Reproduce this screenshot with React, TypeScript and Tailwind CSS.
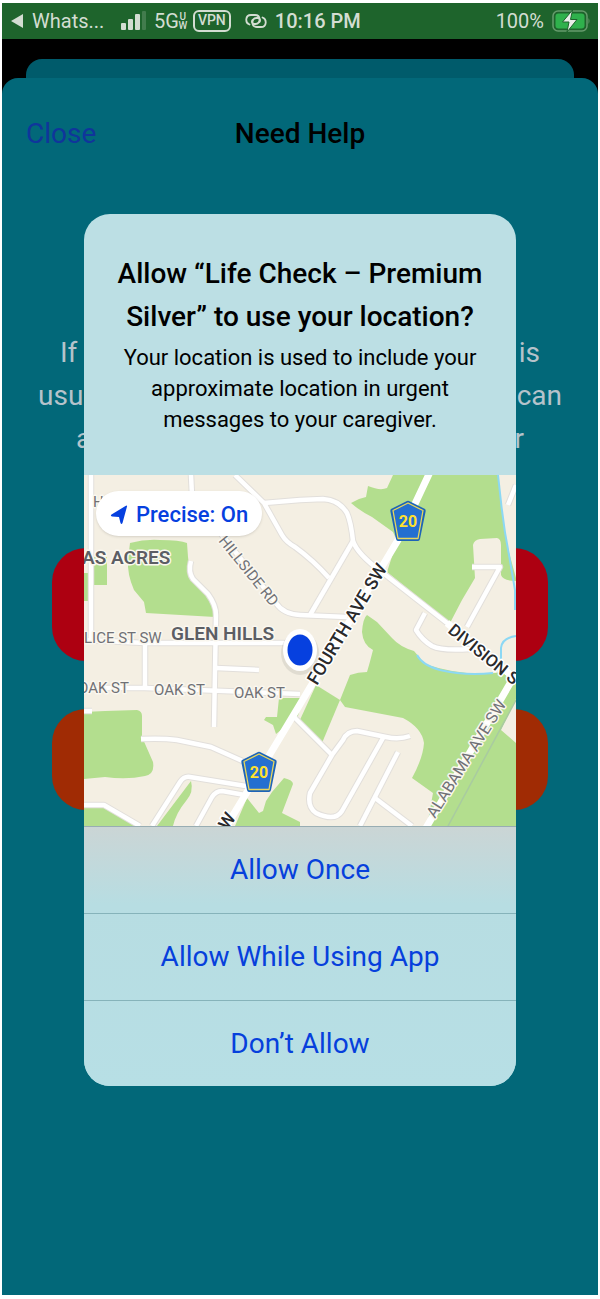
import React from 'react';

const GREEN = '#b3de8e';

const parks = [
  'M84 573H88V601H84Z',
  'M93 557H107V585H93Z',
  'M130 543Q145 539 160 540Q180 540 187 543L188 557L190 573L215 607V617L146 613L144 602L134 590Q127 574 128 560Z',
  'M84 712L105 711L137 710Q142 711 142 716L142 737L153 762Q155 774 145 776Q127 780 105 777L84 779Z',
  'M191 781Q194 792 186 801Q176 813 173 826H157Z',
  'M84 808H104L138 826H84Z',
  'M279 698H302L298 716L276 734L273 725L264 720L266 717L277 717Z',
  'M316 685L340 700L322 743L299 722Z',
  'M235 826L247 798L259 813L263 811L266 801L272 792L284 778Q293 780 293 784L282 813L300 822V826Z',
  'M393 475L387 488Q380 491 368 486L366 497L359 499L351 503Q360 511 372 517L393 532L397 541L387 572L450 623L462 600L475 578L473 545Q474 540 480 539L497 538Q501 539 501 545V575Q503 581 516 581V578L507 545L503 520L498 475Z',
  'M367 615Q363 618 362 632Q363 645 373 650Q370 662 367 672Q358 672 350 675L340 700L345 707L403 718Q422 728 424 743Q423 758 412 778L433 793L427 826H516V743L501 730L516 699V670L495 673Q460 676 425 664L414 651Q400 647 392 638L377 622Z',
];

const roads = [
  'M91 475V643', 'M84 640L145 643H300', 'M191 475L192 495',
  'M191 561Q188 572 193 579L208 594Q216 605 216 615L214 727',
  'M145 643V688', 'M84 688L145 688L300 694', 'M216 668L259 670', 'M84 711H92',
  'M141 739Q163 738 177 740L211 747L247 763',
  'M152 826L180 782Q184 776 190 777L252 787',
  'M196 826L212 797Q216 791 222 791L245 795',
  'M84 805H104L140 826',
  'M235 475L264 503L282 535Q286 542 295 547Q313 560 329 578',
  'M264 503L300 500L323 499Q339 500 347 513Q351 522 353 541Q357 554 383 573L447 623L516 679',
  'M353 541L310 615', 'M210 520L276 603Q283 614 300 615L347 617',
  'M472 567H500L467 627', 'M425 613L416 630Q422 640 432 646Q442 651 470 649',
  'M516 485L508 505',
  'M294 717L332 755', 'M410 736Q399 740 386 737L357 731Q347 731 343 740L332 755L310 793Q307 807 316 813Q335 822 342 811L383 738',
  'M398 752L360 826', 'M375 798L412 826',
];

function CountyShield({ x, y }: { x: number; y: number }) {
  return (
    <g transform={`translate(${x} ${y})`}>
      <path d="M-1-20Q0-20.500 1-20L17-12Q18-11 17.500-9L12 18Q11.500 20 10 20H-10Q-11.500 20-12 18L-17.500-9Q-18-11-17-12Z" fill="#1d64b8" />
      <path d="M0-18L15-10.500L10 17.500H-10L-15-10.500Z" fill="#246fd0" stroke="#e9d75b" strokeWidth="1.300" strokeLinejoin="round" />
      <text y="6" textAnchor="middle" fontSize="16" fontWeight="700" fill="#ffe12e">20</text>
    </g>
  );
}

function LocationMap() {
  return (
    <svg viewBox="84 475 432 351" role="img" aria-label="Map" className="block w-full">
      <rect x="84" y="475" width="432" height="351" fill="#f4efe3" />
      {parks.map((d) => <path key={d} d={d} fill={GREEN} />)}
      <g fill="none" stroke="#8cd8f4" strokeWidth="2">
        <path d="M498 475L501 502Q504 530 509 555L515 590V610M516 636Q502 638 501 648V668M417 655Q422 665 440 670Q465 676 493 673" />
      </g>
      <g fill="none" stroke="#e2dfdb" strokeWidth="6.500" strokeLinejoin="round">
        {roads.map((d) => <path key={d} d={d} />)}
      </g>
      <g fill="none" stroke="#fff" strokeWidth="4.500" strokeLinejoin="round">
        {roads.map((d) => <path key={d} d={d} />)}
      </g>
      <path d="M516 700L448 826" stroke="#a9cba0" strokeWidth="1.500" />
      <path d="M224 830L258 774L299 706L383 565L398 540L430 472M512 680L426 828M447 623L516 679" fill="none" stroke="#fff" strokeWidth="7" />
      <g stroke="#faf7ef" strokeWidth="3" strokeLinejoin="round" paintOrder="stroke" fill="#707176" fontSize="15">
        <text x="93" y="507">H</text>
        <text x="84" y="643">LICE ST SW</text>
        <text x="78" y="693">OAK ST</text>
        <text x="154" y="695">OAK ST</text>
        <text x="234" y="698">OAK ST</text>
        <text transform="translate(218 541) rotate(51)">HILLSIDE RD</text>
        <text transform="translate(435 819) rotate(-58)" fontSize="16">ALABAMA AVE SW</text>
        <g fill="#5c5e64" fontSize="19" fontWeight="600">
          <text x="82" y="564">AS ACRES</text>
          <text x="171" y="640">GLEN HILLS</text>
        </g>
        <g fill="#29292b" stroke="#fff" fontSize="18" fontWeight="500">
          <text transform="translate(317 686) rotate(-59)">FOURTH AVE SW</text>
          <text transform="translate(447 632) rotate(39)" fontSize="17">DIVISION S</text>
          <text transform="translate(228 831) rotate(-58)">W</text>
        </g>
      </g>
      <CountyShield x={408} y={521} />
      <CountyShield x={259} y={772} />
      <ellipse cx="300" cy="653" rx="19" ry="22" fill="#000" opacity=".08" />
      <ellipse cx="300" cy="650" rx="17" ry="21" fill="#fff" />
      <ellipse cx="300" cy="650" rx="12.500" ry="15.500" fill="#0640df" />
    </svg>
  );
}

function StatusBar() {
  return (
    <header className="flex h-9 items-center bg-[#1e642c] px-2 text-xl text-[#d3ddd2]">
      <svg viewBox="0 0 14 16" className="mr-2 h-4 w-3.5" fill="currentColor"><path d="M1 8L13 1V15Z" /></svg>
      <span className="w-[88px]">Whats...</span>
      <svg viewBox="0 0 26 20" className="h-5 w-[26px]" fill="currentColor">
        <rect x="1" y="12" width="5" height="7" rx="1" /><rect x="8" y="8" width="5" height="11" rx="1" />
        <rect x="15" y="3" width="5" height="16" rx="1" /><rect x="22" width="4" height="19" rx="1" opacity=".2" />
      </svg>
      <span className="ml-2">5G</span>
      <span className="flex w-2 flex-col items-center text-[10px] leading-[9px] font-medium"><span>U</span><span>W</span></span>
      <span className="ml-1.5 flex h-[22px] items-center rounded-md border-2 border-current px-[3px] text-[14px] font-medium">VPN</span>
      <svg viewBox="0 0 22 18" className="ml-3.5 h-[18px] w-[22px]" fill="none" stroke="currentColor" strokeWidth="1.800" strokeLinecap="round">
        <path d="M4.500 12.500C0 11 0 3 6 3H10C16 3 16 12 10.500 12H9C7 12 6.500 9.500 7.500 8" />
        <path d="M17.500 5.500C22 7 22 15 16 15H12C6 15 6 6 11.500 6H13C15 6 15.500 8.500 14.500 10" />
      </svg>
      <span className="ml-2 font-medium">10:16 PM</span>
      <span className="ml-auto">100%</span>
      <svg viewBox="0 0 38 24" className="ml-2 h-6 w-[38px]">
        <rect x="1" y="2" width="34" height="20" rx="5" fill="none" stroke="#669a6c" strokeWidth="1.500" />
        <rect x="3.500" y="4.500" width="29" height="15" rx="3" fill="#2fb14c" />
        <path d="M36.500 9Q38.500 12 36.500 15Z" fill="#669a6c" />
        <path d="M20.500 1L10.500 13H17L15 23L25 10.500H18.500Z" fill="#e8eee8" stroke="#1e642c" strokeWidth="1" />
      </svg>
    </header>
  );
}

export default function App() {
  return (
    <div className="min-h-screen bg-white px-0.5 pt-[3px] pb-1 font-['Roboto',sans-serif]">
      <div className="bg-black">
        <StatusBar />
        <div className="mx-6 mt-5 h-[19px] rounded-t-[16px] bg-[#005b6b]" />
        <main className="relative min-h-[1217px] rounded-t-[16px] bg-[#026879]">
          <div className="grid grid-cols-3 items-center px-6 pt-[38px] text-[28px] leading-9">
            <button className="justify-self-start text-[#10359b]">Close</button>
            <h1 className="justify-self-center font-medium whitespace-nowrap text-black">Need Help</h1>
          </div>
          <div className="pt-[179px] text-[28px] leading-[43px] text-[#b5c3cb]">
            <div className="flex justify-between px-[58px]"><span>If</span><span>is</span></div>
            <div className="flex justify-between px-9"><span>usua</span><span>can</span></div>
            <div className="flex justify-between px-[74px]"><span>a</span><span>r</span></div>
          </div>
          <div className="mx-[50px] mt-[88px] h-[113px] rounded-[34px] bg-[#ad0011]" />
          <div className="mx-[50px] mt-12 h-[101px] rounded-[34px] bg-[#a02b04]" />

          <section role="dialog" aria-labelledby="title" className="absolute inset-x-0 top-[136px] mx-auto w-[432px] max-w-full overflow-hidden rounded-[26px] bg-[#bcdfe4]">
            <div className="px-6 pt-[38px] pb-10 text-center text-black">
              <h2 id="title" className="mb-1 text-[28px] leading-[43px] font-medium">Allow “Life Check – Premium<br />Silver” to use your location?</h2>
              <p className="text-[22px] leading-[31px]">Your location is used to include your<br />approximate location in urgent<br />messages to your caregiver.</p>
            </div>
            <div className="relative">
              <LocationMap />
              <button className="absolute top-4 left-3 flex h-[45px] items-center gap-2 rounded-full bg-white px-3.5 pt-0.5 text-[22px] font-medium text-[#0640df] shadow-sm">
                <svg viewBox="0 0 18 20" className="h-5 w-[18px]" fill="currentColor"><path d="M17 1.500L12.500 18Q11.500 20 10.500 18L9 12L2 11.500Q0 11 1.500 9.500L15.500 1Q17.500 0 17 1.500Z" /></svg>
                Precise: On
              </button>
            </div>
            <div className="grid bg-linear-to-b from-[#cbd5d5] via-[#b7dde2] via-30% to-[#b7dfe5] text-[28px] text-[#0640dc]">
              <button className="h-[87px] border-t border-[#98adb3]">Allow Once</button>
              <button className="h-[87px] border-t border-[#86b3ba]">Allow While Using App</button>
              <button className="h-[86px] border-t border-[#86b3ba]">Don’t Allow</button>
            </div>
          </section>
        </main>
      </div>
    </div>
  );
}
